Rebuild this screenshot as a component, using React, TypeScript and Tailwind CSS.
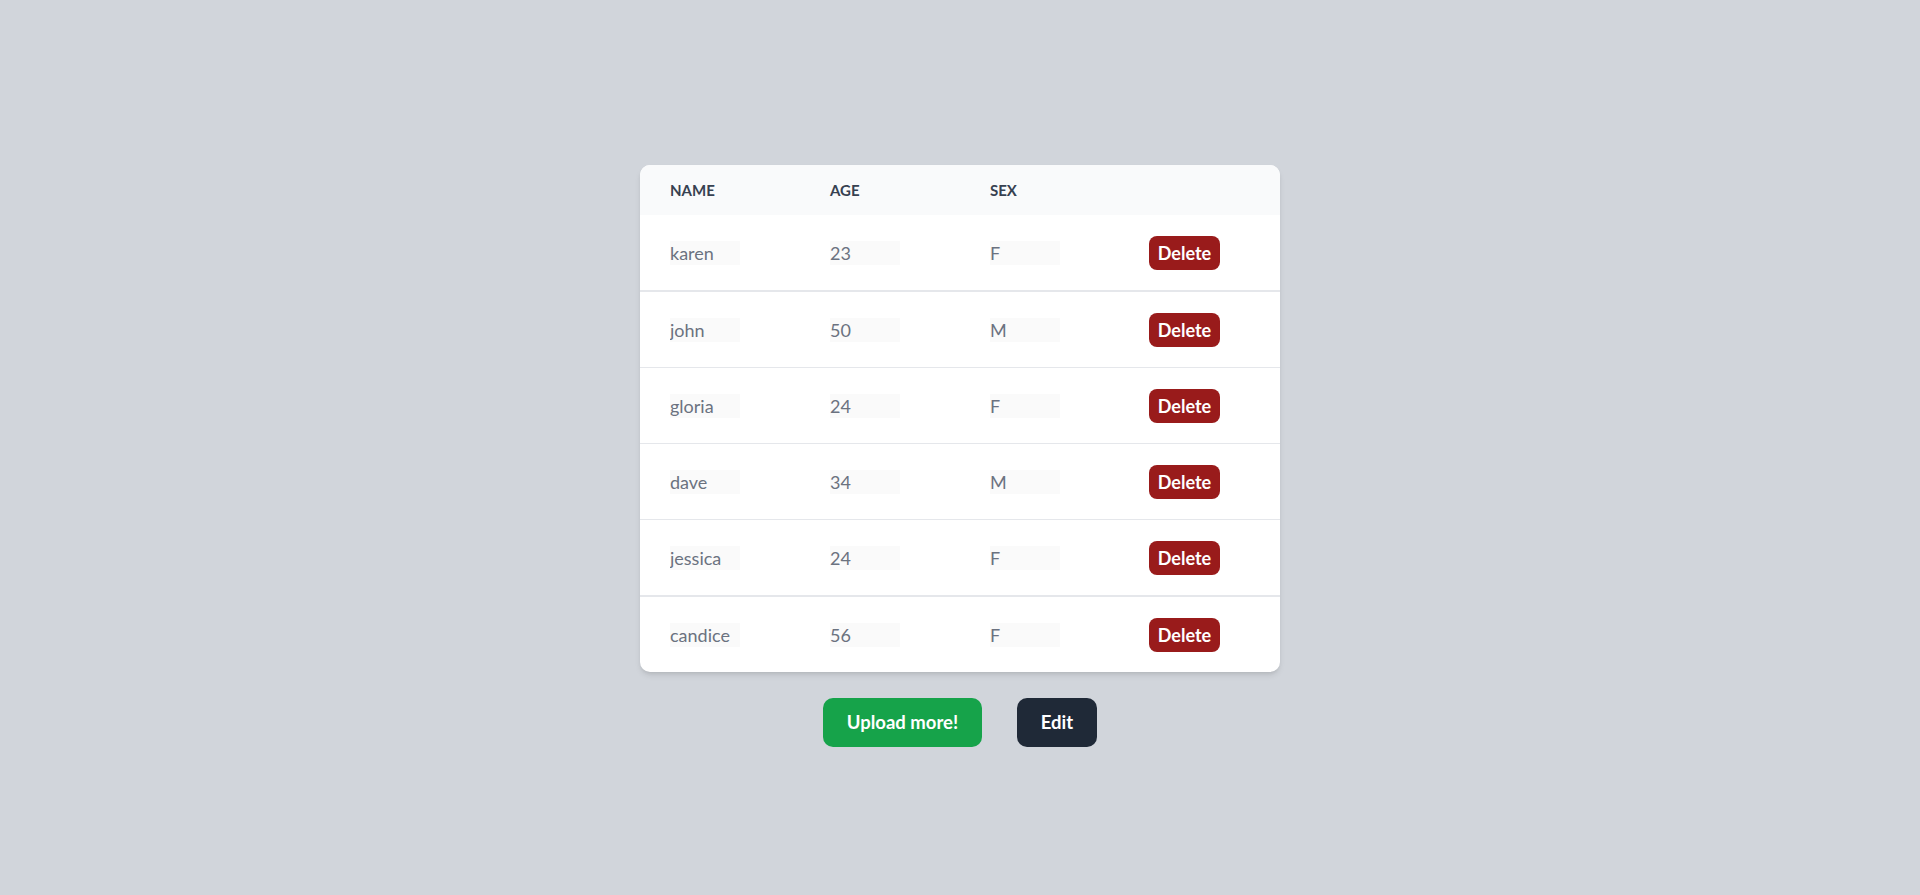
import type React from "react";

type Person = { name: string; age: string; sex: string };

const people: Person[] = [
  { name: "karen", age: "23", sex: "F" },
  { name: "john", age: "50", sex: "M" },
  { name: "gloria", age: "24", sex: "F" },
  { name: "dave", age: "34", sex: "M" },
  { name: "jessica", age: "24", sex: "F" },
  { name: "candice", age: "56", sex: "F" },
];

// rows 1 and 5 show a slightly heavier rule in the reference
const borders = ["border-b-2", "border-b", "border-b", "border-b", "border-b-2", ""];

const Cell: React.FC<{ value: string }> = ({ value }) => (
  <div className="pl-[30px] flex items-center">
    <input
      readOnly
      defaultValue={value}
      className="w-[70px] h-[24px] bg-[#fafafa] text-[18px] leading-[26px] pt-[1px] text-[#6b7280] outline-none"
    />
  </div>
);

const App: React.FC = () => {
  return (
    <div
      className="min-h-screen w-full bg-[#d1d5db] flex flex-col items-center pt-[165px]"
      style={{ fontFamily: "Lato, 'Open Sans', sans-serif" }}
    >
      <div className="w-[640px] bg-white rounded-[10px] shadow-md overflow-hidden">
        <div className="grid grid-cols-4 h-[50px] bg-[#f9fafb] items-center">
          {["Name", "Age", "Sex", ""].map((h, i) => (
            <div
              key={i}
              className="pl-[30px] text-[15px] font-bold uppercase text-[#374151]"
            >
              {h}
            </div>
          ))}
        </div>
        {people.map((p, i) => (
          <div
            key={p.name}
            className={`grid grid-cols-4 h-[75px] box-content border-[#e5e7eb] ${borders[i]}`}
          >
            <Cell value={p.name} />
            <Cell value={p.age} />
            <Cell value={p.sex} />
            <div className="pl-[29px] flex items-center">
              <button className="w-[71px] h-[34px] pt-[1px] rounded-[8px] bg-[#991b1b] text-white font-bold text-[18px]">
                Delete
              </button>
            </div>
          </div>
        ))}
      </div>
      <div className="flex justify-center gap-[35px] mt-[26px]">
        <button className="w-[159px] h-[49px] pt-[1px] rounded-[10px] bg-[#16a34a] text-white font-bold text-[18.5px]">
          Upload more!
        </button>
        <button className="w-[80px] h-[49px] pt-[1px] rounded-[10px] bg-[#1f2937] text-white font-bold text-[18.5px]">
          Edit
        </button>
      </div>
    </div>
  );
};

export default App;
